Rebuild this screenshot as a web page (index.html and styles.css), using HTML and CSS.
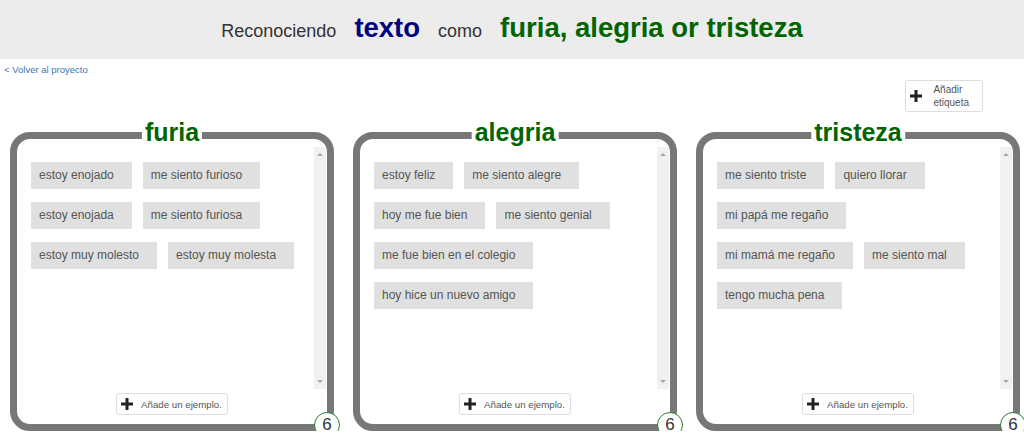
FILE: index.html
```html
<!DOCTYPE html>
<html lang="es">
<head>
<meta charset="utf-8">
<title>Reconociendo texto</title>
<link rel="stylesheet" href="styles.css">
</head>
<body>
<header class="top">
  <span class="t-plain">Reconociendo</span>
  <span class="t-type">texto</span>
  <span class="t-plain">como</span>
  <span class="t-labels">furia, alegria or tristeza</span>
</header>
<a class="back" href="#">&lt; Volver al proyecto</a>
<div class="toolbar">
  <button class="add-label" type="button">
    <svg class="plus" viewBox="0 0 12 12" width="12" height="12"><rect x="0" y="4.5" width="12" height="3" /><rect x="4.5" y="0" width="3" height="12" /></svg>
    <span>Añadir<br>etiqueta</span>
  </button>
</div>
<main class="panels">
  <section class="panel">
    <h2 class="panel-title">furia</h2>
    <div class="panel-body">
      <div class="chips">
        <div class="chip">estoy enojado</div>
        <div class="chip">me siento furioso</div>
        <div class="chip">estoy enojada</div>
        <div class="chip">me siento furiosa</div>
        <div class="chip">estoy muy molesto</div>
        <div class="chip">estoy muy molesta</div>
      </div>
      <div class="scrollbar"><span class="arrow up"></span><span class="arrow down"></span></div>
    </div>
    <button class="add-example" type="button">
      <svg class="plus" viewBox="0 0 12 12" width="12" height="12"><rect x="0" y="4.5" width="12" height="3" /><rect x="4.5" y="0" width="3" height="12" /></svg>
      <span>Añade un ejemplo.</span>
    </button>
    <span class="count">6</span>
  </section>
  <section class="panel">
    <h2 class="panel-title">alegria</h2>
    <div class="panel-body">
      <div class="chips">
        <div class="chip">estoy feliz</div>
        <div class="chip">me siento alegre</div>
        <div class="chip">hoy me fue bien</div>
        <div class="chip">me siento genial</div>
        <div class="chip">me fue bien en el colegio</div>
        <div class="chip">hoy hice un nuevo amigo</div>
      </div>
      <div class="scrollbar"><span class="arrow up"></span><span class="arrow down"></span></div>
    </div>
    <button class="add-example" type="button">
      <svg class="plus" viewBox="0 0 12 12" width="12" height="12"><rect x="0" y="4.5" width="12" height="3" /><rect x="4.5" y="0" width="3" height="12" /></svg>
      <span>Añade un ejemplo.</span>
    </button>
    <span class="count">6</span>
  </section>
  <section class="panel">
    <h2 class="panel-title">tristeza</h2>
    <div class="panel-body">
      <div class="chips">
        <div class="chip">me siento triste</div>
        <div class="chip">quiero llorar</div>
        <div class="chip">mi papá me regaño</div>
        <div class="chip">mi mamá me regaño</div>
        <div class="chip">me siento mal</div>
        <div class="chip">tengo mucha pena</div>
      </div>
      <div class="scrollbar"><span class="arrow up"></span><span class="arrow down"></span></div>
    </div>
    <button class="add-example" type="button">
      <svg class="plus" viewBox="0 0 12 12" width="12" height="12"><rect x="0" y="4.5" width="12" height="3" /><rect x="4.5" y="0" width="3" height="12" /></svg>
      <span>Añade un ejemplo.</span>
    </button>
    <span class="count">6</span>
  </section>
</main>
</body>
</html>
```
FILE: styles.css
```css
body {
  margin: 0;
  background: #fff;
  font-family: "Liberation Sans", Arial, sans-serif;
  overflow: hidden;
}

.top {
  height: 59px;
  box-sizing: border-box;
  padding-top: 12px;
  background: #ececec;
  display: flex;
  justify-content: center;
  align-items: baseline;
  gap: 18px;
  line-height: 31px;
}

.t-plain {
  font-size: 18px;
  color: #333;
}

.t-type {
  font-size: 27.5px;
  font-weight: bold;
  color: #000080;
}

.t-labels {
  font-size: 27.5px;
  font-weight: bold;
  color: #006400;
}

.back {
  display: inline-block;
  margin: 4px 0 0 4px;
  font-size: 9.5px;
  line-height: 12px;
  color: #3c78b4;
  text-decoration: none;
}

.toolbar {
  display: flex;
  justify-content: flex-end;
  padding-right: 41px;
  margin-top: 3px;
}

.plus {
  display: block;
  flex: none;
  fill: #222;
}

.add-label {
  display: flex;
  align-items: center;
  gap: 11px;
  height: 32px;
  box-sizing: border-box;
  padding: 0 13px 0 4px;
  border: 1px solid #ddd;
  border-radius: 3px;
  background: #fff;
  font-family: "Liberation Sans", Arial, sans-serif;
  font-size: 10px;
  line-height: 13px;
  color: #555;
  text-align: left;
}

.panels {
  display: flex;
  gap: 19px;
  padding-left: 10px;
  margin-top: 20px;
}

.panel {
  position: relative;
  flex: 0 0 324px;
  height: 299px;
  box-sizing: border-box;
  border: 7px solid #777;
  border-radius: 20px;
  display: flex;
  flex-direction: column;
  align-items: center;
}

.panel-title {
  position: absolute;
  top: -19px;
  left: 50%;
  transform: translateX(-50%);
  margin: 0;
  padding: 0 3px;
  background: #fff;
  font-size: 25px;
  line-height: 24px;
  font-weight: bold;
  color: #006400;
  white-space: nowrap;
}

.panel-body {
  align-self: stretch;
  display: flex;
  height: 242px;
  margin: 8px 1px 0 0;
}

.chips {
  flex: 1;
  display: flex;
  flex-wrap: wrap;
  align-content: flex-start;
  gap: 13px 11px;
  padding: 15px 14px 0 14px;
}

.chip {
  height: 27px;
  line-height: 27px;
  padding: 0 18px 0 8px;
  background: #e0e0e0;
  color: #555;
  font-size: 12px;
  white-space: nowrap;
}

.scrollbar {
  width: 12px;
  box-sizing: border-box;
  padding: 6px 0;
  background: #f1f1f1;
  display: flex;
  flex-direction: column;
  justify-content: space-between;
  align-items: center;
}

.arrow {
  width: 0;
  height: 0;
  border-left: 3px solid transparent;
  border-right: 3px solid transparent;
}

.arrow.up {
  border-bottom: 3px solid #a8a8a8;
}

.arrow.down {
  border-top: 3px solid #a8a8a8;
}

.add-example {
  margin-top: 4px;
  height: 22px;
  box-sizing: border-box;
  display: flex;
  align-items: center;
  gap: 8px;
  padding: 0 5px 0 4px;
  border: 1px solid #ddd;
  border-radius: 3px;
  background: #fff;
  font-family: "Liberation Sans", Arial, sans-serif;
  font-size: 9.7px;
  color: #555;
}

.count {
  position: absolute;
  right: -13px;
  bottom: -14px;
  width: 24px;
  height: 24px;
  border: 1px solid #2e7d32;
  border-radius: 50%;
  background: #fff;
  display: flex;
  align-items: center;
  justify-content: center;
  font-size: 17px;
  color: #333;
}
```
